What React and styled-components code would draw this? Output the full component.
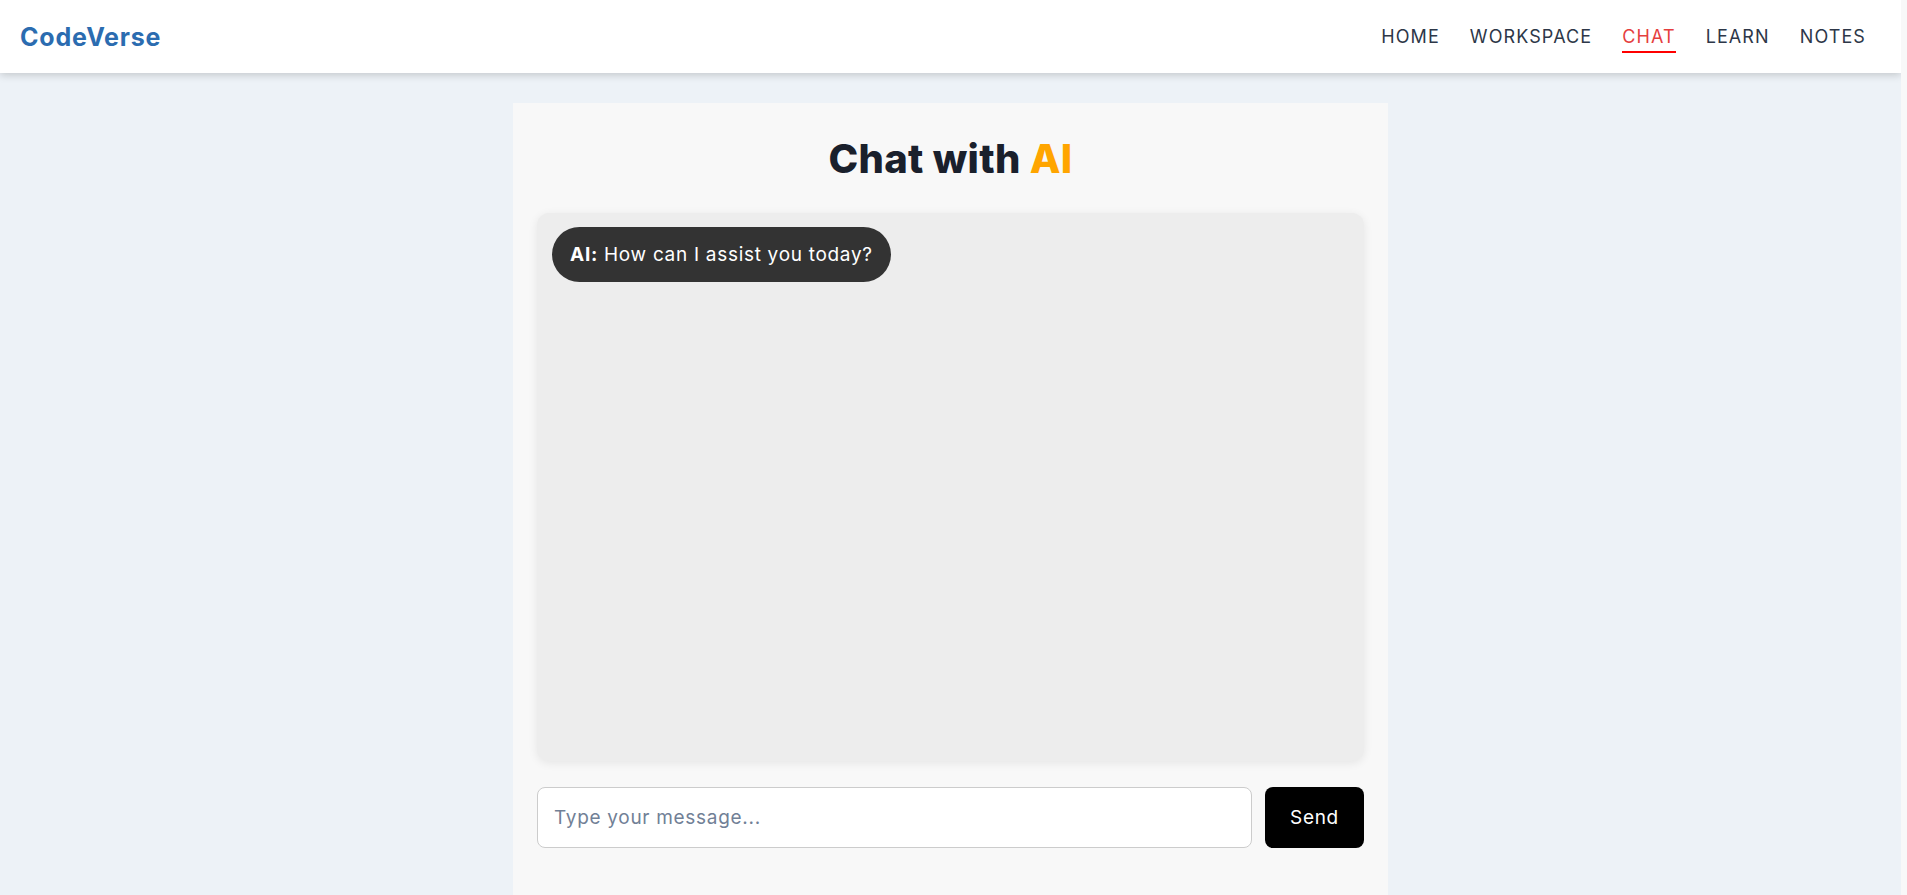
import React, { useState } from 'react';
import styled, { createGlobalStyle } from 'styled-components';

const GlobalStyle = createGlobalStyle`
  * { box-sizing: border-box; }
  html { overflow-y: scroll; background: #f8f8f8; }
  body {
    margin: 0;
    margin-right: 6px;
    background: #edf2f7;
    font-family: Inter, "Noto Sans", sans-serif;
    color: #1a202c;
  }
  ::-webkit-scrollbar { width: 6px; }
  ::-webkit-scrollbar-track { background: #f5f5f5; }
  ::-webkit-scrollbar-thumb { background: #808080; border-radius: 3px; }
`;

const links = ['HOME', 'WORKSPACE', 'CHAT', 'LEARN', 'NOTES'];

const App = () => {
  const [message, setMessage] = useState('');
  const messages = [{ from: 'AI', text: 'How can I assist you today?' }];

  return (
    <>
      <GlobalStyle />
      <Header>
        <Logo>CodeVerse</Logo>
        <Nav>
          {links.map((l) => (
            <NavLink key={l} $active={l === 'CHAT'}>{l}</NavLink>
          ))}
        </Nav>
      </Header>

      <Panel>
        <Title>
          Chat with <Accent>AI</Accent>
        </Title>

        <ChatBox>
          {messages.map((m, i) => (
            <Bubble key={i}>
              <strong>{m.from}:</strong> {m.text}
            </Bubble>
          ))}
        </ChatBox>

        <InputRow>
          <Input
            type="text"
            placeholder="Type your message..."
            value={message}
            onChange={(e) => setMessage(e.target.value)}
          />
          <SendButton>Send</SendButton>
        </InputRow>
      </Panel>
    </>
  );
};

const Header = styled.header`
  height: 73px;
  background: #fff;
  display: flex;
  align-items: center;
  justify-content: space-between;
  padding: 0 20px;
  box-shadow: 0 2px 8px rgba(0, 0, 0, 0.18);
`;

const Logo = styled.div`
  font-size: 25px;
  font-weight: 700;
  color: #2b6cb0;
  letter-spacing: 0.8px;
`;

const Nav = styled.nav`
  display: flex;
  align-items: center;
  padding-top: 2px;
`;

const NavLink = styled.a`
  margin: 0 15px;
  font-size: 18px;
  letter-spacing: 1.1px;
  padding: 4px 0;
  color: ${(p) => (p.$active ? '#e53e3e' : '#2d3748')};
  border-bottom: 2px solid ${(p) => (p.$active ? '#ff0000' : 'transparent')};
  cursor: pointer;
`;

const Panel = styled.main`
  width: 875px;
  margin: 30px auto 30px;
  min-height: 1020px;
  background: #f8f8f8;
  padding: 32px 24px 24px;
`;

const Title = styled.h2`
  margin: 0 0 30px;
  text-align: center;
  font-size: 40px;
  line-height: 48px;
  font-weight: 800;
  letter-spacing: 0.3px;
  color: #1a202c;
`;

const Accent = styled.span`
  color: #ffa500;
`;

const ChatBox = styled.div`
  height: 548px;
  background: #ededed;
  border-radius: 12px;
  padding: 14px 15px;
  box-shadow: 0 2px 10px rgba(0, 0, 0, 0.08);
  display: flex;
  flex-direction: column;
  align-items: flex-start;
  overflow-y: auto;
`;

const Bubble = styled.div`
  background: #333;
  color: #fff;
  font-size: 19px;
  letter-spacing: 0.7px;
  line-height: 27px;
  padding: 14px 18px;
  border-radius: 28px;

  strong { font-weight: 700; }
`;

const InputRow = styled.div`
  display: flex;
  gap: 13px;
  margin-top: 26px;
`;

const Input = styled.input`
  flex: 1;
  height: 61px;
  padding: 0 16px;
  border: 1px solid #ccc;
  border-radius: 8px;
  background: #fff;
  font-family: inherit;
  font-size: 19px;
  letter-spacing: 0.7px;
  outline: none;

  &::placeholder { color: #718096; }
`;

const SendButton = styled.button`
  width: 99px;
  height: 61px;
  border: 0;
  border-radius: 8px;
  background: #000;
  color: #fff;
  font-family: inherit;
  font-size: 19px;
  letter-spacing: 0.7px;
  cursor: pointer;
`;

export default App;
